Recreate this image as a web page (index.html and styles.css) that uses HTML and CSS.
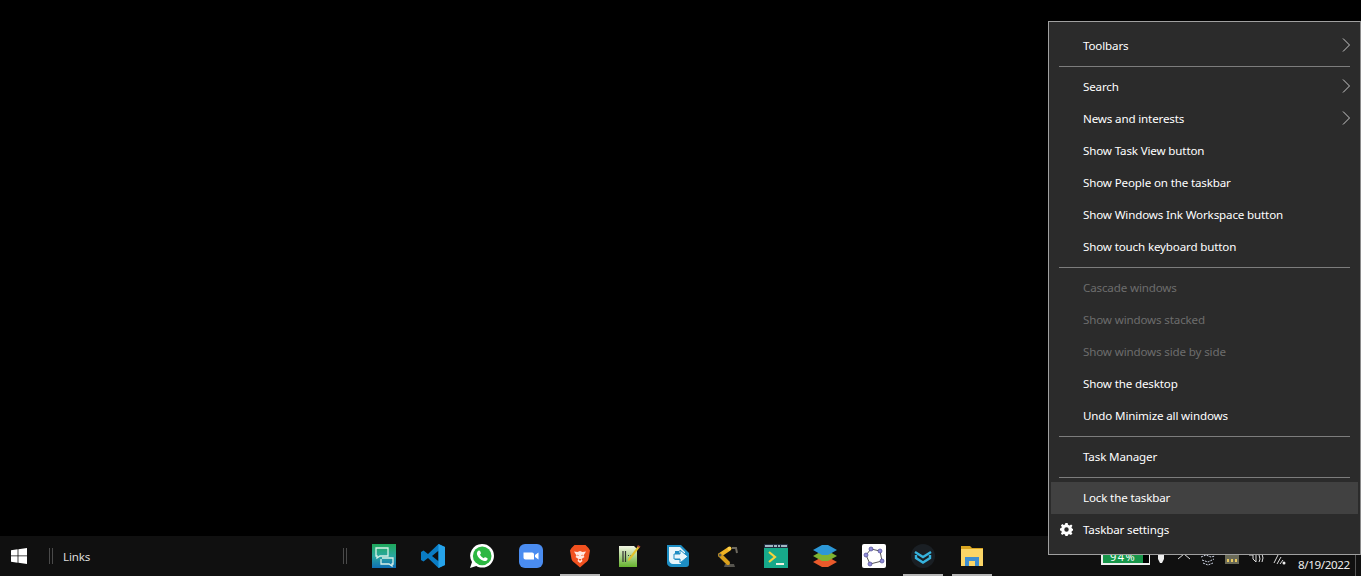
FILE: index.html
```html
<!DOCTYPE html>
<html lang="en">
<head>
  <meta charset="UTF-8" />
  <title>Taskbar context menu</title>
  <link rel="stylesheet" href="styles.css">
</head>
<body>

<div class="desktop"></div>

<!-- Taskbar -->
<div class="taskbar">
  <div class="start">
    <svg width="16" height="16" viewBox="0 0 16 16"><path fill="#fff" d="M0 2.3 6.6 1.3V7.5H0ZM7.4 1.2 16 0V7.5H7.4ZM0 8.3H6.6V14.7L0 13.7ZM7.4 8.3H16V16L7.4 14.8Z"/></svg>
  </div>
  <div class="grip"></div>
  <div class="links">Links</div>
  <div class="grip grip-end"></div>

  <div class="apps">
    <div class="app">
      <svg width="24" height="24" viewBox="0 0 24 24">
        <defs><linearGradient id="g1" x1="0" y1="0" x2="0" y2="1"><stop offset="0" stop-color="#1fa85a"/><stop offset=".5" stop-color="#2aa7a0"/><stop offset="1" stop-color="#0f6fb5"/></linearGradient></defs>
        <rect width="24" height="24" fill="url(#g1)"/>
        <path fill="none" stroke="#d8efe6" stroke-width="1.3" d="M4 4H16V12H8L5 14V12H4ZM10 14H21V20H20V22L17 20H9V15"/>
      </svg>
    </div>
    <div class="app">
      <svg width="24" height="24" viewBox="0 0 24 24">
        <path fill="#0a7cc4" d="M17.5 0 24 3V21L17.5 24 7 14 2.5 17.5 0 16V8L2.5 6.500 7 10ZM17.5 6.800 11 12 17.500 17.200Z"/>
        <path fill="#26a3ea" d="M17.500 0 24 3V21L17.500 24Z"/>
      </svg>
    </div>
    <div class="app">
      <svg width="24" height="24" viewBox="0 0 24 24">
        <path fill="#fff" d="M12.200 0A11.800 11.800 0 0 1 12.200 23.600C10 23.600 8 23 6.300 22L0 24 2 18A11.800 11.800 0 0 1 12.200 0Z"/>
        <circle cx="12.200" cy="11.900" r="9.300" fill="#2cb742"/>
        <path fill="#fff" d="M8.800 6.500C9.500 6.300 9.900 6.600 10.200 7.300L10.900 9C11 9.500 10.500 10.100 10 10.700 10.800 12.300 12 13.400 13.700 14.200 14.300 13.600 14.800 13 15.300 13.200L17.100 14.100C17.700 14.400 17.700 15 17.400 15.700 16.800 16.800 15.500 17.300 14 17 10.500 16 8 13.500 7 10.400 6.600 8.700 7.500 7 8.800 6.500Z"/>
      </svg>
    </div>
    <div class="app">
      <svg width="24" height="24" viewBox="0 0 24 24">
        <rect width="24" height="24" rx="6" fill="#4a8cf0"/>
        <path fill="#fff" d="M4.500 8.500H13C14.200 8.500 15 9.300 15 10.500V15.500H6.500C5.300 15.500 4.500 14.700 4.500 13.500ZM16 11 19.500 8.500V15.500L16 13Z"/>
      </svg>
    </div>
    <div class="app has-line">
      <svg width="24" height="24" viewBox="0 0 24 24">
        <path fill="#f1511f" d="M6.500 1H17.500L20.500 4 22 6.500 20.500 15C20 17 18 18.500 16 20L12 23.500 8 20C6 18.500 4 17 3.500 15L2 6.500 3.500 4Z"/>
        <path fill="#ffe9e0" d="M6 7.500 9.500 8 12 7 14.500 8 18 7.500 15.500 11.500 16.500 13 13.500 15 14.500 17 12 19 9.500 17 10.500 15 7.500 13 8.500 11.500Z"/>
        <path fill="#f1511f" d="M9.500 10.500 11 11.500 9.500 12ZM14.500 10.500 13 11.500 14.500 12ZM11 15H13V16.500H11Z"/>
      </svg>
    </div>
    <div class="app">
      <svg width="24" height="24" viewBox="0 0 24 24">
        <defs><linearGradient id="g6" x1="0" y1="0" x2="0" y2="1"><stop offset="0" stop-color="#f2f5e4"/><stop offset="1" stop-color="#66b32e"/></linearGradient></defs>
        <path fill="url(#g6)" d="M2 2H17L20 5V23H2Z"/>
        <path stroke="#333" stroke-width="1.200" d="M6 7V18M8.500 7V18M11 11.500H12M13.500 11.500H14.500"/>
        <path fill="#e2c22a" d="M21 2 23 3 13 16 11 17 11.500 14.500Z"/>
        <path fill="#a8432f" d="M21 1 23.500 2.500 22.500 4 20 2.500Z"/>
      </svg>
    </div>
    <div class="app">
      <svg width="24" height="24" viewBox="0 0 24 24">
        <path fill="#1d8ec4" d="M1 1H15L23 9V20C23 22 22 23 20 23H6C3 23 1 21 1 19Z"/>
        <path fill="#e8f6fb" d="M3 3H14L19 8V9H13V7H9V16H15V20H7C5 20 3 18 3 16Z"/>
        <path fill="#e8f6fb" stroke="#1d8ec4" d="M8 10H14V6L22 12.500 14 19V15H8Z"/>
      </svg>
    </div>
    <div class="app">
      <svg width="24" height="24" viewBox="0 0 24 24">
        <path fill="#57554f" d="M10 20H19L20 23H9Z"/>
        <path fill="none" stroke="#6e6a60" stroke-width="2" d="M17 4H21L22 9"/>
        <path fill="none" stroke="#f0b323" stroke-width="4" stroke-linecap="round" d="M14 5 5 11"/>
        <path fill="none" stroke="#d9a01c" stroke-width="4" stroke-linecap="round" d="M5 11 13 19"/>
        <circle cx="14.500" cy="4.500" r="2" fill="#ffd24a"/>
        <circle cx="5" cy="11" r="1.500" fill="#57554f"/>
      </svg>
    </div>
    <div class="app">
      <svg width="24" height="24" viewBox="0 0 24 24">
        <rect width="24" height="24" fill="#17a98a"/>
        <rect width="24" height="4" fill="#222c3f"/>
        <path stroke="#cfe6f2" stroke-width="1.500" stroke-dasharray="8 1 3 1 2 1" d="M1 2H23"/>
        <path fill="none" stroke="#f6d33c" stroke-width="2.200" d="M5 8 11 13 5 18"/>
        <path stroke="#f2efe0" stroke-width="2" d="M12 20H20"/>
      </svg>
    </div>
    <div class="app">
      <svg width="24" height="24" viewBox="0 0 24 24">
        <path fill="#ea5a2b" d="M9 13H15L24 18 15 23H9L0 18Z"/>
        <path fill="#7eb332" d="M9 7H15L24 12 15 17H9L0 12Z"/>
        <path fill="#2c97d6" d="M9 1H15L24 6 15 11H9L0 6Z"/>
      </svg>
    </div>
    <div class="app">
      <svg width="24" height="24" viewBox="0 0 24 24">
        <rect width="24" height="24" rx="2" fill="#fff"/>
        <path fill="none" stroke="#555" stroke-width="1" d="M9 5 18 7 20 17 8 20 4 11Z"/>
        <g fill="#8f8bd8" stroke="#4e4a94" stroke-width=".7">
          <circle cx="9" cy="5" r="2"/><circle cx="18" cy="7" r="2"/><circle cx="20" cy="17" r="2"/><circle cx="8" cy="20" r="2"/><circle cx="4" cy="11" r="2"/>
        </g>
      </svg>
    </div>
    <div class="app has-line">
      <svg width="24" height="24" viewBox="0 0 24 24">
        <circle cx="12" cy="12" r="12" fill="#1a1f24"/>
        <path fill="none" stroke="#36b3de" stroke-width="2.400" d="M4 8 12 13 20 8M5 11V14L12 18.500 19 14V11"/>
      </svg>
    </div>
    <div class="app has-line">
      <svg width="24" height="24" viewBox="0 0 24 24">
        <path fill="#d9a520" d="M1 2H10L12 4H23V8H1Z"/>
        <path fill="#fbd566" d="M1 5H23V22H1Z"/>
        <path fill="#3e8ed0" d="M5 13H19V22H15V17H9V22H5Z"/>
      </svg>
    </div>
  </div>

  <!-- Tray, mostly under the menu -->
  <div class="tray">
    <div class="battery"><div class="battery-fill">94%</div></div>
    <div class="tray-slot tray-slot-first"><svg width="10" height="10" viewBox="0 0 10 10"><path fill="#eee" d="M2 0H8V5L6 9H4L2 5Z"/></svg></div>
    <div class="tray-slot"><svg width="14" height="10" viewBox="0 0 14 10"><path fill="none" stroke="#ddd" d="M1 5 7 0 13 5"/></svg></div>
    <div class="tray-slot"><svg width="16" height="12" viewBox="0 0 16 12"><path fill="none" stroke="#cfd6e6" stroke-dasharray="2 1" d="M1 3 6 1 11 3 15 2M2 6 8 8 14 5M3 9 8 11 13 9"/></svg></div>
    <div class="tray-slot"><svg width="14" height="10" viewBox="0 0 14 10"><rect width="14" height="10" fill="#6a6a58"/><path fill="#e8c860" d="M2 5H4V8H2ZM6 5H8V8H6ZM10 5H12V8H10Z"/></svg></div>
    <div class="tray-slot"><svg width="16" height="10" viewBox="0 0 16 10"><path fill="none" stroke="#ddd" d="M1 1H5V5L8 8V0M11 1 12 5 11 8M14 0 15 4 14 8"/></svg></div>
    <div class="tray-slot"><svg width="14" height="12" viewBox="0 0 14 12"><path fill="none" stroke="#ddd" d="M1 9 5 1M4 10 8 3M7 10 10 6"/><circle cx="11" cy="9" r="1.500" fill="#eee"/></svg></div>
    <div class="clock">8/19/2022</div>
    <div class="show-desktop"></div>
  </div>
</div>

<!-- Context menu -->
<div class="menu">
  <div class="item"><span>Toolbars</span><svg class="arrow" width="8" height="14" viewBox="0 0 8 14"><path d="M1 .5 7.500 7 1 13.500"/></svg></div>
  <div class="sep"></div>
  <div class="item"><span>Search</span><svg class="arrow" width="8" height="14" viewBox="0 0 8 14"><path d="M1 .5 7.500 7 1 13.500"/></svg></div>
  <div class="item"><span>News and interests</span><svg class="arrow" width="8" height="14" viewBox="0 0 8 14"><path d="M1 .5 7.500 7 1 13.500"/></svg></div>
  <div class="item">Show Task View button</div>
  <div class="item">Show People on the taskbar</div>
  <div class="item">Show Windows Ink Workspace button</div>
  <div class="item">Show touch keyboard button</div>
  <div class="sep"></div>
  <div class="item disabled">Cascade windows</div>
  <div class="item disabled">Show windows stacked</div>
  <div class="item disabled">Show windows side by side</div>
  <div class="item">Show the desktop</div>
  <div class="item">Undo Minimize all windows</div>
  <div class="sep"></div>
  <div class="item">Task Manager</div>
  <div class="sep"></div>
  <div class="item active">Lock the taskbar</div>
  <div class="item">
    <svg class="gear" width="13" height="13" viewBox="0 0 14 14"><path fill="#fff" fill-rule="evenodd" d="M5.800 0H8.200L8.600 2 10.300 2.700 12 1.600 13.400 3 12.300 4.700 13 6 14 6.400V8.200L12.900 8.500 12.300 9.900 13.400 11.400 11.800 13 10.200 12 8.700 12.500 8.200 14H5.800L5.400 12.400 3.900 11.800 2.300 12.800 1 11.300 2 9.800 1.300 8.400 0 8.200V5.800L1.400 5.500 2 4.200 1 2.700 2.500 1.200 4 2.200 5.400 1.600ZM7 4.600A2.400 2.400 0 1 0 7 9.400 2.400 2.400 0 1 0 7 4.600Z"/></svg>
    Taskbar settings
  </div>
</div>

</body>
</html>
```
FILE: styles.css
```css
* {
  box-sizing: border-box;
}
html, body {
  height: 100%;
}
body {
  margin: 0;
  background: #000;
  color: #fff;
  font-family: 'Noto Sans', 'Open Sans', sans-serif;
  font-size: 11.6px;
  letter-spacing: -0.15px;
  display: flex;
  flex-direction: column;
  overflow: hidden;
}

.desktop {
  flex: 1;
}

.taskbar {
  height: 40px;
  background: #101010;
  display: flex;
  align-items: center;
}
.start {
  width: 49px;
  padding-left: 11px;
  display: flex;
}
.grip {
  width: 4px;
  height: 16px;
  border-left: 1px solid #4a4a4a;
  border-right: 1px solid #4a4a4a;
}
.links {
  width: 290px;
  padding-left: 10px;
  color: #ddd;
}

.apps {
  margin-left: 17px;
  display: flex;
}
.app {
  width: 40px;
  height: 40px;
  margin-right: 9px;
  display: flex;
  align-items: center;
  justify-content: center;
}
.has-line {
  border-bottom: 2px solid #b5b5b5;
  padding-top: 2px;
}

.tray {
  margin-left: auto;
  height: 40px;
  display: flex;
  align-items: flex-start;
}
.battery {
  width: 49px;
  height: 29px;
  border: 2px solid #eee;
  border-right-width: 1px;
  background: #000;
}
.battery-fill {
  width: 40px;
  height: 100%;
  background: #17964a;
  font-size: 11px;
  line-height: 13px;
  letter-spacing: 1.5px;
  padding-top: 12px;
  text-align: center;
}
.tray-slot {
  width: 24px;
  padding-top: 18px;
  display: flex;
  justify-content: center;
}
.tray-slot-first {
  width: 22px;
}
.clock {
  width: 52px;
  margin: 21px 0 0 6px;
  line-height: 16px;
  letter-spacing: -0.35px;
  color: #eee;
  white-space: nowrap;
}
.show-desktop {
  width: 1px;
  height: 22px;
  margin: 18px 5px 0;
  background: #555;
}

.menu {
  position: absolute;
  top: 21px;
  right: 0;
  width: 313px;
  height: 534px;
  padding: 8px 2px;
  background: #2b2b2b;
  border: 1px solid #a0a0a0;
  border-right-color: #8a8a8a;
}
.item {
  height: 32px;
  padding: 0 0 2px 32px;
  display: flex;
  align-items: center;
  position: relative;
}
.item span {
  flex: 1;
}
.item.disabled {
  color: #6d6d6d;
}
.item.active {
  background: #414141;
}
.arrow {
  margin-right: 8px;
}
.arrow path {
  fill: none;
  stroke: #c8c8c8;
  stroke-width: 1;
}
.gear {
  position: absolute;
  left: 9px;
  top: 9px;
}
.sep {
  height: 1px;
  margin: 4px 8px;
  background: #7d7d7d;
}
```
